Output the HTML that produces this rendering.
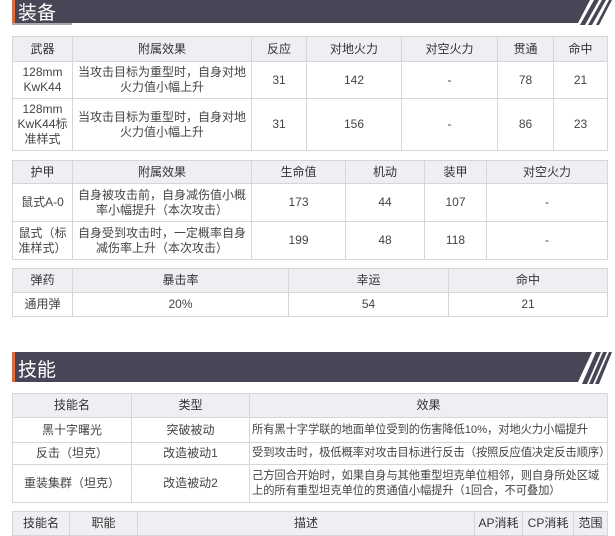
<!DOCTYPE html><html><head><meta charset="utf-8"><style>
body{margin:0;width:615px;height:525px;background:#fff;position:relative;overflow:hidden;font-family:"Liberation Sans","Noto Sans CJK SC",sans-serif;color:#444;font-size:12px}
table{position:absolute;border-collapse:collapse;table-layout:fixed;left:12px;width:596px}
td,th{border:1px solid #d6d6d6;text-align:center;padding:0 3px;line-height:15px;font-weight:normal;overflow:hidden}
th{background:#edeff2;color:#333}
.l{text-align:left;font-size:11.3px;padding:0 2px;white-space:nowrap;letter-spacing:-0.1px}
.w{white-space:normal}
.band{position:absolute;left:12px}
.t{position:absolute;color:#fff;font-size:19px;left:18px}
</style></head><body>
<svg class="band" style="top:0" width="600" height="30"><polygon points="0,0 578,0 566,23 0,23" fill="#464657"/><rect x="0" y="0" width="3" height="23" fill="#e06a3a"/><polygon points="582,0 587,0 573,25 568,25" fill="#464657"/><polygon points="590,0 594,0 580,25 576,25" fill="#464657"/><polygon points="597,0 600,0 587,25 584,25" fill="#464657"/><rect x="0" y="23" width="60" height="2" fill="#aaa"/></svg>
<div class="t" style="top:-2px">装备</div>
<table style="top:36px"><colgroup><col style="width:60px"><col style="width:179px"><col style="width:55px"><col style="width:95px"><col style="width:96px"><col style="width:56px"><col></colgroup>
<tr style="height:25px"><th>武器</th><th>附属效果</th><th>反应</th><th>对地火力</th><th>对空火力</th><th>贯通</th><th>命中</th></tr>
<tr style="height:37px"><td>128mm KwK44</td><td>当攻击目标为重型时，自身对地火力值小幅上升</td><td>31</td><td>142</td><td>-</td><td>78</td><td>21</td></tr>
<tr style="height:52px"><td>128mm KwK44标准样式</td><td>当攻击目标为重型时，自身对地火力值小幅上升</td><td>31</td><td>156</td><td>-</td><td>86</td><td>23</td></tr></table>
<table style="top:160px"><colgroup><col style="width:60px"><col style="width:179px"><col style="width:94px"><col style="width:79px"><col style="width:62px"><col></colgroup>
<tr style="height:23px"><th>护甲</th><th>附属效果</th><th>生命值</th><th>机动</th><th>装甲</th><th>对空火力</th></tr>
<tr style="height:38px"><td>鼠式A-0</td><td>自身被攻击前，自身减伤值小概率小幅提升（本次攻击）</td><td>173</td><td>44</td><td>107</td><td>-</td></tr>
<tr style="height:38px"><td>鼠式（标准样式）</td><td>自身受到攻击时，一定概率自身减伤率上升（本次攻击）</td><td>199</td><td>48</td><td>118</td><td>-</td></tr></table>
<table style="top:268px"><colgroup><col style="width:60px"><col style="width:216px"><col style="width:160px"><col></colgroup>
<tr style="height:24px"><th>弹药</th><th>暴击率</th><th>幸运</th><th>命中</th></tr>
<tr style="height:24px"><td>通用弹</td><td>20%</td><td>54</td><td>21</td></tr></table>
<svg class="band" style="top:352px" width="600" height="32"><polygon points="0,0 580,0 566,30 0,30" fill="#464657"/><rect x="0" y="0" width="3" height="30" fill="#e06a3a"/><polygon points="584,0 589,0 575,32 570,32" fill="#464657"/><polygon points="591,0 595,0 581,32 577,32" fill="#464657"/><polygon points="597,0 600,0 587,32 583,32" fill="#464657"/></svg>
<div class="t" style="top:355px">技能</div>
<table style="top:393px"><colgroup><col style="width:119px"><col style="width:118px"><col></colgroup>
<tr style="height:24px"><th>技能名</th><th>类型</th><th>效果</th></tr>
<tr style="height:25px"><td>黑十字曙光</td><td>突破被动</td><td class="l">所有黑十字学联的地面单位受到的伤害降低10%，对地火力小幅提升</td></tr>
<tr style="height:22px"><td>反击（坦克）</td><td>改造被动1</td><td class="l">受到攻击时，极低概率对攻击目标进行反击（按照反应值决定反击顺序）</td></tr>
<tr style="height:38px"><td>重装集群（坦克）</td><td>改造被动2</td><td class="l w">己方回合开始时，如果自身与其他重型坦克单位相邻，则自身所处区域上的所有重型坦克单位的贯通值小幅提升（1回合，不可叠加）</td></tr></table>
<table style="top:511px"><colgroup><col style="width:57px"><col style="width:68px"><col style="width:337px"><col style="width:48px"><col style="width:51px"><col></colgroup>
<tr style="height:24px"><th>技能名</th><th>职能</th><th>描述</th><th>AP消耗</th><th>CP消耗</th><th>范围</th></tr></table>
</body></html>
